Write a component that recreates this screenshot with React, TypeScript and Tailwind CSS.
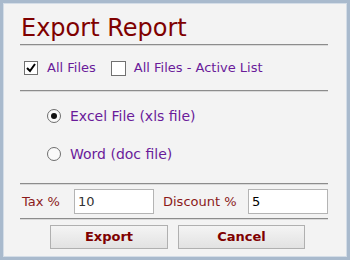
import { useState } from "react";

const font = { fontFamily: "Tahoma, 'DejaVu Sans', 'Liberation Sans', sans-serif" };

function Rule() {
  return <div className="h-[2px] bg-[#8c8c8c] border-b border-[#d9d9d9]" />;
}

export default function App() {
  const [allFiles, setAllFiles] = useState(true);
  const [activeList, setActiveList] = useState(false);
  const [format, setFormat] = useState("xls");

  return (
    <div
      className="w-[350px] h-[260px] border-[3px] border-[#a9bacd] bg-[#f3f3f3] overflow-hidden"
      style={font}
    >
      <div className="h-full border border-[#d4dde7] pl-[16px] pr-[18px]">
        {/* title */}
        <h1 className="mt-[9px] h-[30px] text-[24px] leading-[30px] text-[#7f0000] pl-[1px]">
          Export Report
        </h1>
        <div className="mt-[1px]">
          <Rule />
        </div>

        {/* file selection */}
        <div className="flex items-center h-[44px] pl-[4px] text-[13px] text-[#6a1b9a]">
          <label className="flex items-center cursor-pointer" onClick={() => setAllFiles(!allFiles)}>
            <span className="w-[14px] h-[14px] border border-[#707070] bg-white flex items-center justify-center">
              {allFiles && (
                <svg width="10" height="10" viewBox="0 0 10 10">
                  <path d="M1 5 L4 8 L9 1" fill="none" stroke="#000" strokeWidth="2" />
                </svg>
              )}
            </span>
            <span className="ml-[9px]">All Files</span>
          </label>
          <label className="flex items-center ml-[15px] cursor-pointer" onClick={() => setActiveList(!activeList)}>
            <span className="w-[15px] h-[15px] border border-[#707070] bg-white flex items-center justify-center">
              {activeList && (
                <svg width="10" height="10" viewBox="0 0 10 10">
                  <path d="M1 5 L4 8 L9 1" fill="none" stroke="#000" strokeWidth="2" />
                </svg>
              )}
            </span>
            <span className="ml-[8px]">All Files - Active List</span>
          </label>
        </div>
        <Rule />

        {/* format */}
        <div className="flex flex-col pl-[27px] pt-[17px] gap-[24px] h-[91px] text-[14px] text-[#6a1b9a]">
          {[
            { id: "xls", label: "Excel File (xls file)" },
            { id: "doc", label: "Word (doc file)" },
          ].map((o) => (
            <label key={o.id} className="flex items-center h-[14px] cursor-pointer" onClick={() => setFormat(o.id)}>
              <span className="w-[14px] h-[14px] rounded-full border border-[#6e6e6e] bg-[#fafafa] flex items-center justify-center">
                {format === o.id && <span className="w-[6px] h-[6px] rounded-full bg-[#111]" />}
              </span>
              <span className="ml-[9px]">{o.label}</span>
            </label>
          ))}
        </div>
        <Rule />

        {/* tax / discount */}
        <div className="flex items-center h-[33px] pl-[2px] text-[13px] text-[#8b1a1a]">
          <span className="w-[52px]">Tax %</span>
          <input
            defaultValue="10"
            className="w-[80px] h-[25px] border border-[#b4b4b4] bg-white px-[3px] text-[13px] text-[#333] outline-none"
            style={font}
          />
          <span className="ml-[9px] w-[85px]">Discount %</span>
          <input
            defaultValue="5"
            className="w-[80px] h-[25px] border border-[#b4b4b4] bg-white px-[3px] text-[13px] text-black outline-none"
            style={font}
          />
        </div>
        <Rule />

        {/* actions */}
        <div className="flex pl-[30px] pt-[5px] gap-[10px]">
          <button className="w-[118px] h-[24px] border border-[#b0b0b0] bg-gradient-to-b from-[#f4f4f4] to-[#e2e2e2] text-[13px] font-bold text-[#7f0000]">
            Export
          </button>
          <button className="w-[127px] h-[24px] border border-[#b0b0b0] bg-gradient-to-b from-[#f4f4f4] to-[#e2e2e2] text-[13px] font-bold text-[#7f0000]">
            Cancel
          </button>
        </div>
      </div>
    </div>
  );
}
